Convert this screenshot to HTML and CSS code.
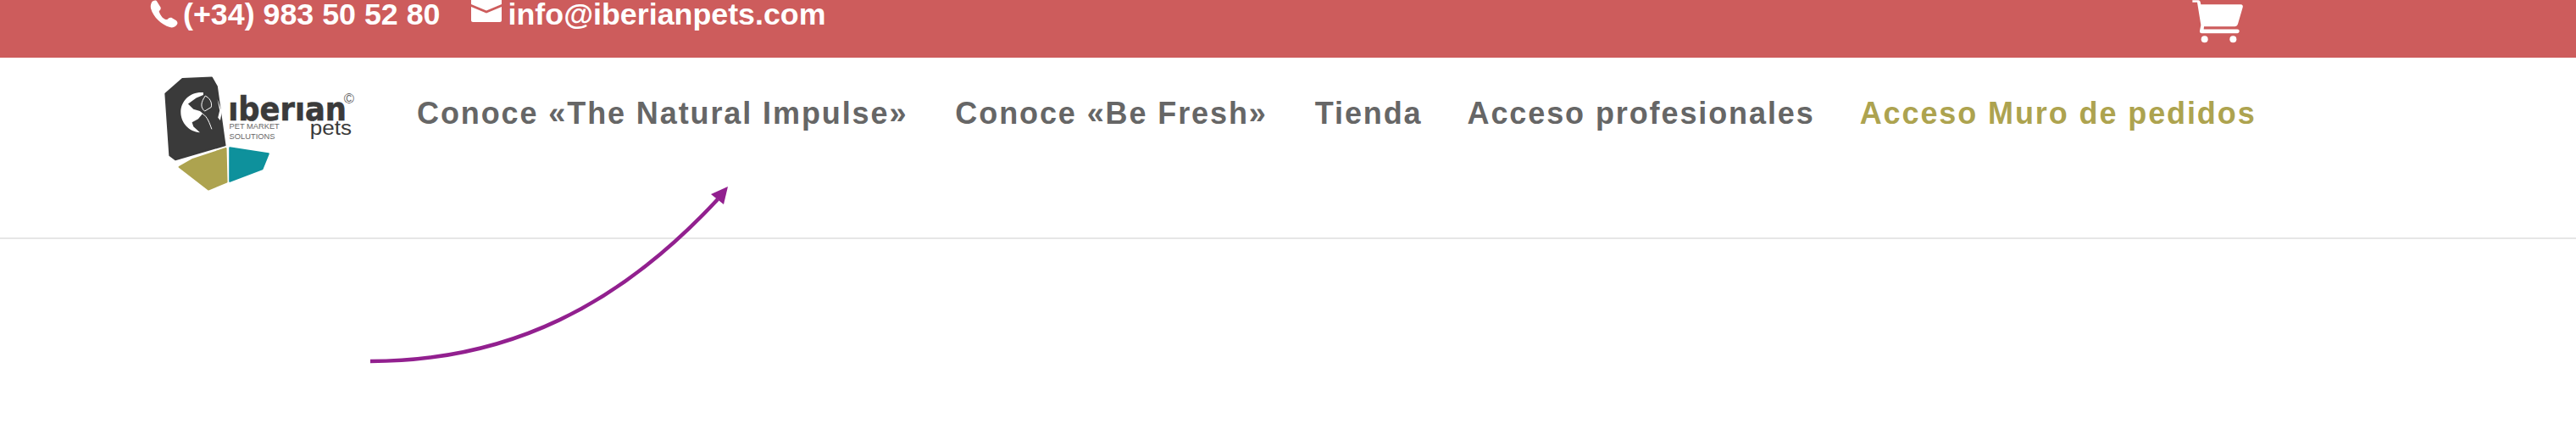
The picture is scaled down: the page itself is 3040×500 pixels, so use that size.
FILE: index.html
```html
<!DOCTYPE html>
<html lang="es">
<head>
    <meta charset="UTF-8">
    <title>Iberian Pets</title>
    <link rel="stylesheet" href="styles.css">
</head>
<body>
    <div id="topBar">
        <div class="top-contact">
            <svg class="phone-icon" viewBox="0 0 34 34"><path d="M2 3 C3 1 6 0 8 1 L13 9 C13.5 11 12.5 12.5 11 13.5 C11 15 13 19 15 21 C17 23 20 24 21.5 23.5 C22.5 22 24 21 26 21.5 L32 25 C34 27 34 29 32 31 C30 33 27 34 24 33 C14 30 4 21 1 10 C0.5 7 1 5 2 3 Z"/></svg>
            <span class="top-phone">(+34) 983 50 52 80</span>
            <svg class="mail-icon" viewBox="0 0 36 26"><path d="M0 0 H36 V5 L18 12.5 L0 5 Z"/><path d="M0 8 L18 15.5 L36 8 V24 C36 25 35 26 34 26 H2 C1 26 0 25 0 24 Z"/></svg>
            <span>info@iberianpets.com</span>
        </div>
        <svg class="cart-icon" viewBox="130 0 195 155">
            <path d="M137 0 H158 C162 0 164 3 165 6 L167 15 H308 C314 15 317 20 315 26 L298 84 C296 90 292 93 287 93 H178 L177 103 H296 C300 103 303 105 303 110 C303 114 300 117 296 117 H170 C165 117 162 113 163 108 L167 88 L154 8 H137 Z"/>
            <circle cx="180" cy="138" r="12"/>
            <circle cx="281" cy="138" r="12"/>
        </svg>
    </div>
    <div id="mainHeader">
        <svg class="logo" viewBox="90 260 700 420">
            <path class="logo-dark logo-round" d="M106 330 L166 278 L270 273 L288 305 L317 513 L141 564 L121 549 Z"/>
            <path class="logo-light" d="M240 326 C195 322 160 355 160 395 C160 435 190 465 228 468 L205 447 L200 432 L222 420 L238 400 L228 392 L205 385 L186 366 L215 345 L240 335 Z"/>
            <path class="logo-light" d="M290 350 L306 395 L300 425 L292 415 L298 390 Z"/>
            <path class="logo-line" d="M247 338 C232 360 228 378 245 392 L268 378 C272 360 262 345 247 338 M238 402 C255 412 262 435 270 456"/>
            <path class="logo-olive logo-round" d="M155 590 L200 564 L320 524 L323 643 L258 670 Z"/>
            <path class="logo-teal logo-round" d="M334 522 L471 543 L449 597 L334 641 Z"/>
            <text class="logo-name" x="328" y="424" textLength="420" lengthAdjust="spacingAndGlyphs">ıberıan</text>
            <text class="logo-small" x="332" y="456" textLength="178" lengthAdjust="spacingAndGlyphs">PET MARKET</text>
            <text class="logo-small" x="332" y="490" textLength="162" lengthAdjust="spacingAndGlyphs">SOLUTIONS</text>
            <text class="logo-pets" x="618" y="476" textLength="148" lengthAdjust="spacingAndGlyphs">pets</text>
            <text class="logo-copy" x="738" y="364">©</text>
        </svg>
        <nav class="nav-menu">
            <a href="#" class="nav-wide">Conoce «The Natural Impulse»</a>
            <a href="#" class="nav-wide">Conoce «Be Fresh»</a>
            <a href="#">Tienda</a>
            <a href="#">Acceso profesionales</a>
            <a href="#" class="nav-gold">Acceso Muro de pedidos</a>
        </nav>
    </div>
    <svg class="arrow" viewBox="0 0 440 220">
        <path d="M6 216 C170 216 300 150 416 25" />
        <polygon points="428,10 408,19 423,31"/>
    </svg>
</body>
</html>
```
FILE: styles.css
```css
html, body {
    margin: 0;
    padding: 0;
    background-color: #ffffff;
}
body {
    font-family: 'Liberation Sans', Arial, sans-serif;
    position: relative;
    height: 500px;
    overflow: hidden;
}
#topBar {
    height: 68px;
    background-color: #cd5c5c;
    color: #ffffff;
    padding-left: 177px;
    padding-right: 390px;
    display: flex;
    justify-content: space-between;
    align-items: flex-start;
    overflow: hidden;
}
.top-contact {
    display: flex;
    align-items: flex-start;
    font-size: 35.8px;
    font-weight: bold;
    line-height: 34px;
}
.phone-icon {
    width: 33px;
    height: 33px;
    fill: #ffffff;
    margin-right: 6px;
}
.top-phone {
    margin-right: 36px;
}
.mail-icon {
    width: 36px;
    height: 26px;
    fill: #ffffff;
    margin-right: 8px;
}
.cart-icon {
    width: 65px;
    height: 52px;
    fill: #ffffff;
}
#mainHeader {
    height: 212px;
    border-bottom: 2px solid #e6e6e6;
    padding-left: 190px;
    display: flex;
    align-items: flex-start;
}
.logo {
    width: 233px;
    height: 140px;
    margin-top: 19px;
    margin-right: 69px;
}
.logo-dark { fill: #3a3a3a; stroke: #3a3a3a; }
.logo-round { stroke-width: 6; stroke-linejoin: round; }
.logo-light { fill: #ffffff; }
.logo-line { fill: none; stroke: #ffffff; stroke-width: 3; }
.logo-olive { fill: #ada34f; stroke: #ada34f; }
.logo-teal { fill: #0e919c; stroke: #0e919c; }
.logo-name { font-size: 118px; font-weight: bold; fill: #3a3a3a; stroke: #3a3a3a; stroke-width: 2; font-family: 'DejaVu Sans', sans-serif; }
.logo-small { font-size: 29px; fill: #666666; }
.logo-pets { font-size: 72px; fill: #3a3a3a; }
.logo-copy { font-size: 50px; fill: #666666; }
.nav-menu {
    display: flex;
    gap: 53px;
    margin-top: 46px;
    font-size: 36px;
    font-weight: bold;
    letter-spacing: 1.9px;
    line-height: 40px;
}
.nav-menu a {
    color: #666666;
    text-decoration: none;
    white-space: nowrap;
}
.nav-menu .nav-wide {
    margin-right: 3px;
}
.nav-menu .nav-gold {
    color: #ada34f;
}
.arrow {
    position: absolute;
    left: 431px;
    top: 210px;
    width: 440px;
    height: 220px;
}
.arrow path {
    fill: none;
    stroke: #92208f;
    stroke-width: 4.5;
}
.arrow polygon {
    fill: #92208f;
}
```
